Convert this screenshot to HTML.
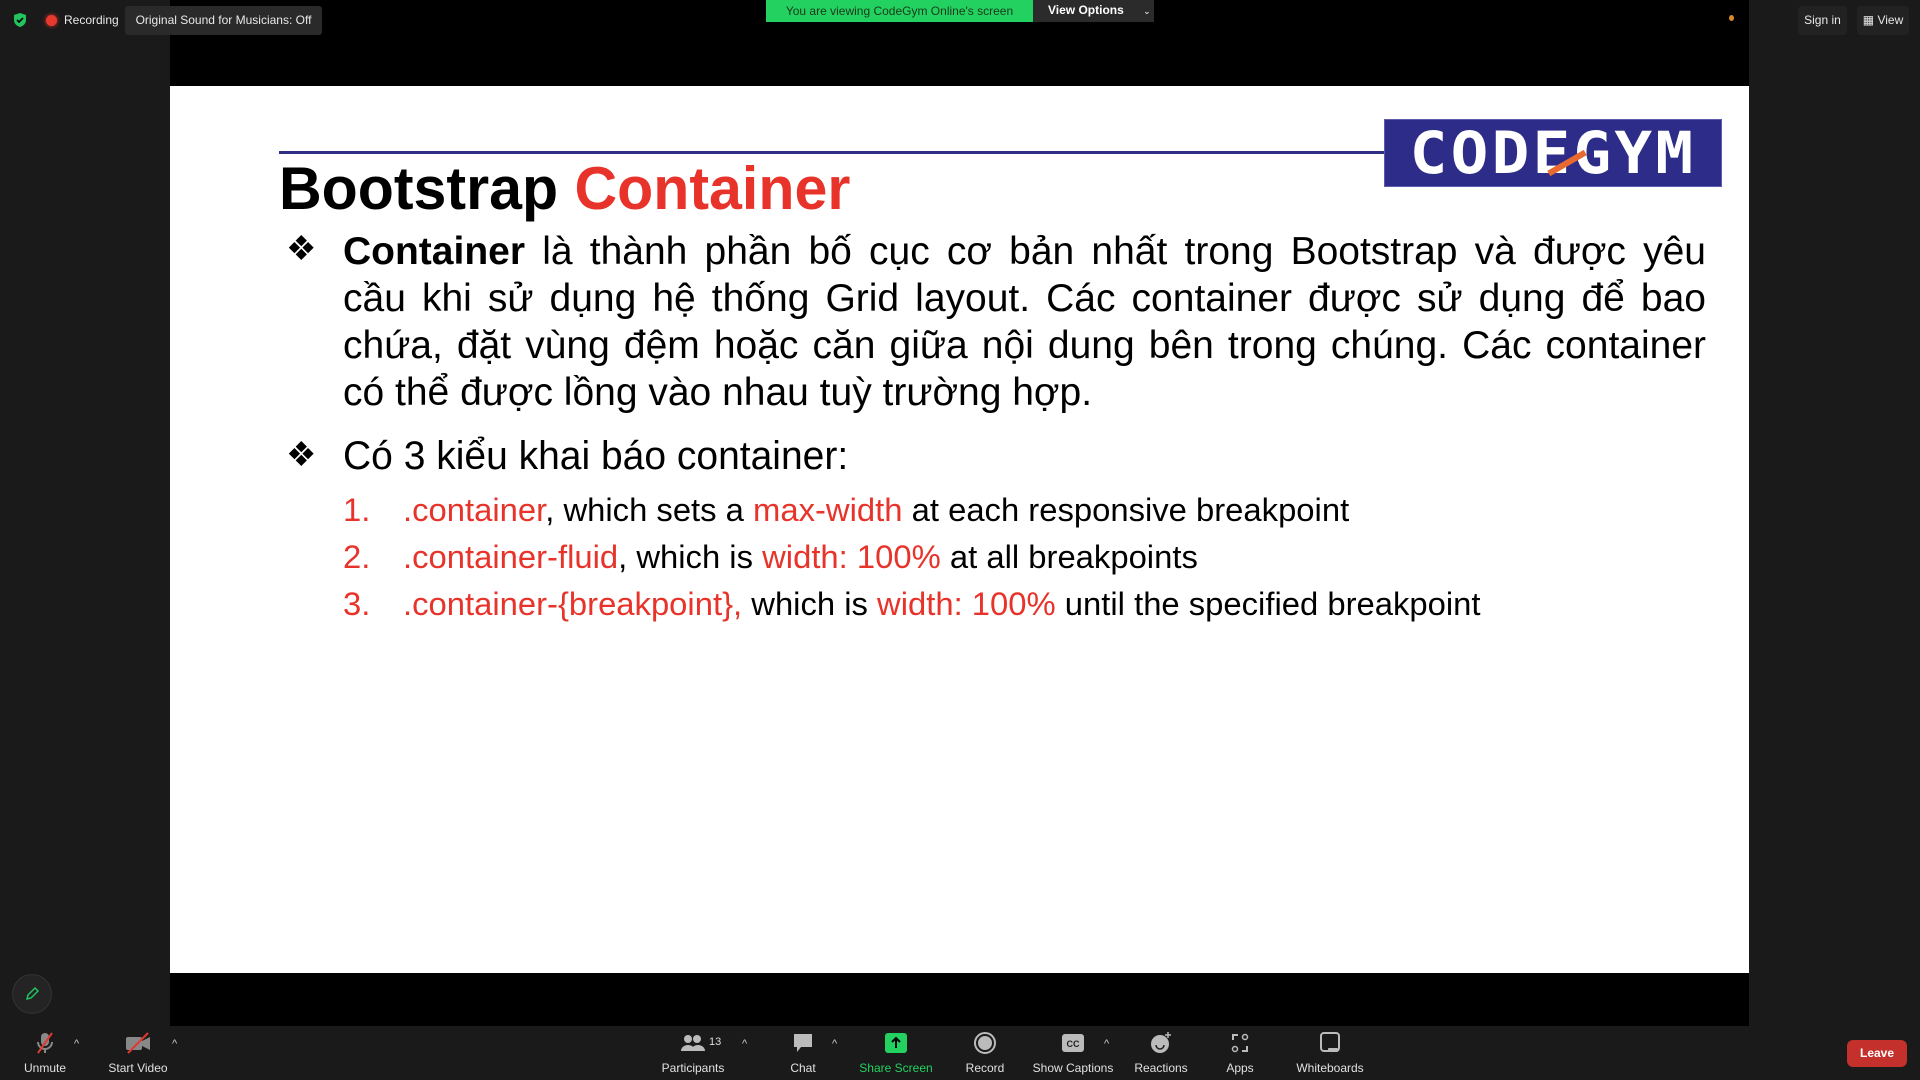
<!DOCTYPE html>
<html><head><meta charset="utf-8"><style>
*{margin:0;padding:0;box-sizing:border-box}
body{width:1920px;height:1080px;background:#1a1a1a;position:relative;overflow:hidden;font-family:"Liberation Sans",Arial,sans-serif}
.abs{position:absolute}
.ui{font-family:"Liberation Sans",sans-serif;color:#e8e8e8;font-size:12px}
.slide{left:170px;top:86px;width:1579px;height:887px;background:#fff}
.txt{color:#000;font-family:"Liberation Sans",Arial,sans-serif}
.red{color:#e8332a}
.j{text-align:justify;text-align-last:justify;white-space:nowrap}
.tb{position:absolute;top:1031px;width:120px;text-align:center;font-size:12px;color:#e0e0e0}
.tb svg{display:block;margin:0 auto 6px;height:24px}
.car{position:absolute;top:1038px;color:#ccc;font-size:11px}
</style></head><body>
<div class="abs" style="left:170px;top:0;width:1579px;height:1026px;background:#000"></div>
<div class="abs slide"></div>

<div class="abs" style="left:766px;top:0;width:267px;height:22px;background:#23d160;color:#1a3a1a;font-size:12px;line-height:22px;text-align:center;">You are viewing CodeGym Online's screen</div>
<div class="abs" style="left:1033px;top:0;width:121px;height:22px;background:#2b2b2b;color:#fff;font-size:12px;line-height:21px;padding-left:15px;font-weight:bold">View Options <span style="margin-left:16px;font-weight:normal;font-size:9px">&#8964;</span></div>
<svg class="abs" style="left:12px;top:12px" width="16" height="16" viewBox="0 0 16 16"><path d="M8 1 L14 3 V8 C14 12 11 14 8 15 C5 14 2 12 2 8 V3Z" fill="#23c45e"/><path d="M5 8 L7 10 L11 6" stroke="#000" stroke-width="1.6" fill="none"/></svg>
<div class="abs" style="left:46px;top:15px;width:11px;height:11px;border-radius:50%;background:#e8392f;box-shadow:0 0 4px #e8392f"></div>
<div class="abs ui" style="left:64px;top:13px">Recording</div>
<div class="abs ui" style="left:125px;top:6px;width:197px;height:29px;background:#2a2a2a;border-radius:3px;line-height:29px;text-align:center">Original Sound for Musicians: Off</div>
<div class="abs" style="left:1729px;top:15px;width:5px;height:6px;border-radius:50%;background:#d98a2a"></div>
<div class="abs ui" style="left:1798px;top:6px;width:49px;height:29px;background:#222;border-radius:4px;line-height:29px;text-align:center">Sign in</div>
<div class="abs ui" style="left:1857px;top:6px;width:52px;height:29px;background:#222;border-radius:4px;line-height:29px;text-align:center">&#9638; View</div>

<div class="abs" style="left:279px;top:151px;width:1106px;height:3px;background:#2f2f86"></div>
<div class="abs" style="left:1384px;top:119px;width:338px;height:68px;background:#2d2c88;border:1px solid #5d5cb0"></div>
<div class="abs" style="left:1384px;top:119px;width:338px;height:68px;color:#fff;font:bold 58px/68px 'DejaVu Sans Mono','Liberation Mono',monospace;text-align:center;letter-spacing:3px;transform:scaleX(1.08)">CODEGYM</div>
<div class="abs" style="left:1546px;top:160px;width:42px;height:6px;background:#e86a30;transform:rotate(-30deg)"></div>

<div class="abs txt" style="left:279px;top:154px;font-size:60px;font-weight:bold;line-height:70px;transform:scaleX(0.985);transform-origin:left">Bootstrap <span class="red">Container</span></div>

<div class="abs txt" style="left:286px;top:229px;font-size:34px">&#10070;</div>
<div class="abs txt" style="left:343px;top:228px;width:1363px;font-size:39px;line-height:47px">
<div class="j"><b>Container</b> là thành phần bố cục cơ bản nhất trong Bootstrap và được yêu</div>
<div class="j">cầu khi sử dụng hệ thống Grid layout. Các container được sử dụng để bao</div>
<div class="j">chứa, đặt vùng đệm hoặc căn giữa nội dung bên trong chúng. Các container</div>
<div>có thể được lồng vào nhau tuỳ trường hợp.</div>
</div>

<div class="abs txt" style="left:286px;top:435px;font-size:34px">&#10070;</div>
<div class="abs txt" style="left:343px;top:433px;font-size:40px;line-height:47px;transform:scaleX(0.975);transform-origin:left">Có 3 kiểu khai báo container:</div>

<div class="abs txt" style="left:343px;top:486px;font-size:32.8px;line-height:47px">
<div><span class="red" style="display:inline-block;width:60px">1.</span><span class="red">.container</span>, which sets a <span class="red">max-width</span> at each responsive breakpoint</div>
<div><span class="red" style="display:inline-block;width:60px">2.</span><span class="red">.container-fluid</span>, which is <span class="red">width: 100%</span> at all breakpoints</div>
<div><span class="red" style="display:inline-block;width:60px">3.</span><span class="red">.container-{breakpoint},</span> which is <span class="red">width: 100%</span> until the specified breakpoint</div>
</div>

<div class="abs" style="left:12px;top:974px;width:40px;height:40px;border-radius:50%;background:#242424;border:1px solid #333"></div>
<svg class="abs" style="left:24px;top:986px" width="16" height="16" viewBox="0 0 16 16"><path d="M3 13 L4 9 L11 2 L14 5 L7 12 Z" fill="none" stroke="#23c45e" stroke-width="1.5"/></svg>

<div class="tb" style="left:-15px"><svg viewBox="0 0 24 24" width="24"><rect x="8" y="2" width="8" height="13" rx="4" fill="#888"/><path d="M5 11 a7 7 0 0 0 14 0 M12 18 V22" stroke="#888" stroke-width="2" fill="none"/><path d="M5 22 L19 2" stroke="#e0392f" stroke-width="2"/></svg>Unmute</div>
<div class="car" style="left:74px">^</div>
<div class="tb" style="left:78px"><svg viewBox="0 0 28 24" width="28"><rect x="2" y="6" width="16" height="13" rx="2" fill="#888"/><path d="M18 10 L26 6 V19 L18 15Z" fill="#888"/><path d="M4 22 L24 2" stroke="#e0392f" stroke-width="2"/></svg>Start Video</div>
<div class="car" style="left:172px">^</div>

<div class="tb" style="left:633px"><svg viewBox="0 0 28 24" width="28"><circle cx="9" cy="8" r="4" fill="#bbb"/><circle cx="18" cy="8" r="4" fill="#bbb"/><path d="M2 20 a7 6 0 0 1 14 0Z M12 20 a7 6 0 0 1 14 0Z" fill="#bbb"/></svg>Participants</div>
<div class="abs" style="left:709px;top:1036px;color:#ddd;font-size:11px">13</div>
<div class="car" style="left:742px">^</div>
<div class="tb" style="left:743px"><svg viewBox="0 0 24 24" width="24"><path d="M3 3 H21 V16 H10 L6 21 V16 H3Z" fill="#bbb"/></svg>Chat</div>
<div class="car" style="left:832px">^</div>
<div class="tb" style="left:836px;color:#23d160"><svg viewBox="0 0 24 24" width="24"><rect x="1" y="2" width="22" height="20" rx="3" fill="#23d160"/><path d="M12 17 V7 M8 11 L12 7 L16 11" stroke="#000" stroke-width="2" fill="none"/></svg>Share Screen</div>
<div class="tb" style="left:925px"><svg viewBox="0 0 24 24" width="24"><circle cx="12" cy="12" r="10" fill="none" stroke="#bbb" stroke-width="2"/><circle cx="12" cy="12" r="7" fill="#bbb"/></svg>Record</div>
<div class="tb" style="left:1013px"><svg viewBox="0 0 24 24" width="24"><rect x="1" y="3" width="22" height="18" rx="3" fill="#bbb"/><text x="12" y="16" font-size="9" text-anchor="middle" font-family="Liberation Sans" fill="#222" font-weight="bold">CC</text></svg>Show Captions</div>
<div class="car" style="left:1104px">^</div>
<div class="tb" style="left:1101px"><svg viewBox="0 0 24 24" width="24"><circle cx="11" cy="13" r="9" fill="#bbb"/><path d="M7 14 a4 4 0 0 0 8 0" stroke="#222" stroke-width="1.5" fill="none"/><path d="M19 1 V7 M16 4 H22" stroke="#bbb" stroke-width="1.5"/></svg>Reactions</div>
<div class="tb" style="left:1180px"><svg viewBox="0 0 24 24" width="24"><path d="M5 9 V4 H10 M19 15 V20 H14" stroke="#bbb" stroke-width="2" fill="none"/><circle cx="17" cy="6" r="2.5" fill="none" stroke="#bbb" stroke-width="1.5"/><circle cx="7" cy="18" r="2.5" fill="none" stroke="#bbb" stroke-width="1.5"/></svg>Apps</div>
<div class="tb" style="left:1270px"><svg viewBox="0 0 24 24" width="24"><rect x="3" y="2" width="18" height="18" rx="3" fill="none" stroke="#bbb" stroke-width="2"/><rect x="10" y="17" width="10" height="4" rx="1" fill="#bbb"/></svg>Whiteboards</div>
<div class="abs" style="left:1847px;top:1040px;width:60px;height:27px;background:#c4302b;border-radius:6px;color:#fff;font-size:12px;line-height:27px;text-align:center;font-weight:bold">Leave</div>
</body></html>
